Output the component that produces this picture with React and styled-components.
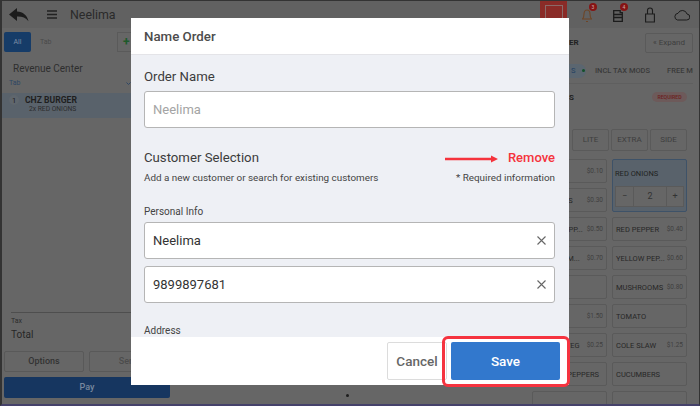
import React from 'react';
import styled, { createGlobalStyle } from 'styled-components';

const Global = createGlobalStyle`
  html, body { margin: 0; padding: 0; }
  body { width: 700px; height: 406px; overflow: hidden; background: #616161; font-family: Roboto, "Liberation Sans", sans-serif; }
  * { box-sizing: border-box; }
`;

const Frame = styled.div`
  position: relative;
  width: 700px;
  height: 406px;
  overflow: hidden;
  background: #666;
  border: 1px solid #333;
  border-left-width: 2px;
  border-bottom: 2px solid #45416a;
  display: flex;
  flex-direction: column;
`;

const TopBar = styled.header`
  height: 27px;
  flex: none;
  display: flex;
  align-items: center;
  background: #616161;
  color: #222;
`;

const BackIcon = styled.svg`
  width: 20px;
  height: 14px;
  margin-left: 7px;
`;

const MenuIcon = styled.svg`
  width: 10px;
  height: 9px;
  margin-left: 18px;
`;

const Title = styled.span`
  font-size: 12.4px;
  margin-left: 13px;
  color: #2a2a2a;
`;

const TopRight = styled.div`
  margin-left: auto;
  display: flex;
  align-items: center;
  height: 27px;
`;

const RedSquare = styled.div`
  width: 27px;
  height: 27px;
  background: #8a2b27;
  display: flex;
  align-items: center;
  justify-content: center;
  margin-right: 15px;
  &::after {
    content: '';
    width: 16px;
    height: 17px;
    border: 1px solid #8a6a68;
  }
`;

const TopIcon = styled.div`
  position: relative;
  width: ${p => p.$w}px;
  height: 16px;
  margin-right: ${p => p.$gap}px;
  svg { display: block; width: ${p => p.$w}px; height: 16px; }
`;

const Badge = styled.span`
  position: absolute;
  top: -4px;
  right: -5px;
  width: 8px;
  height: 8px;
  border-radius: 50%;
  background: #861414;
  color: #caa;
  font-size: 5px;
  line-height: 8px;
  text-align: center;
`;

const Body = styled.div`
  flex: 1;
  display: flex;
  min-height: 0;
`;

const LeftPanel = styled.aside`
  width: 176px;
  flex: none;
  display: flex;
  flex-direction: column;
  background: #666;
`;

const TabRow = styled.div`
  display: flex;
  align-items: center;
  width: 129px;
  height: 20px;
  margin: 4px 0 0 2px;
  flex: none;
`;

const TabAll = styled.div`
  width: 27px;
  height: 20px;
  border-radius: 2px;
  background: #163c68;
  color: #7e8ea6;
  font-size: 7px;
  line-height: 20px;
  text-align: center;
`;

const TabName = styled.div`
  flex: 1;
  height: 20px;
  color: #4a4a4a;
  font-size: 7px;
  line-height: 20px;
  padding-left: 9px;
`;

const TabAdd = styled.div`
  width: 16px;
  height: 20px;
  border: 1px solid #5a5a5a;
  color: #1d5a2a;
  font-size: 12px;
  font-weight: 700;
  line-height: 18px;
  padding-left: 5px;
`;

const Revenue = styled.div`
  font-size: 10px;
  color: #2e2e2e;
  margin: 11px 0 0 11px;
  line-height: 12px;
`;

const TabLabel = styled.div`
  display: flex;
  align-items: center;
  justify-content: space-between;
  width: 122px;
  font-size: 7px;
  color: #2e4664;
  margin: 4px 0 0 7px;
  line-height: 8px;
  flex: none;
`;

const OrderLine = styled.div`
  height: 25px;
  margin-top: 6px;
  background: #59626b;
  display: flex;
  padding: 2px 0 0 7px;
  flex: none;
`;

const Qty = styled.div`
  width: 10px;
  height: 10px;
  border-radius: 50%;
  background: #5f666d;
  color: #222;
  font-size: 7.5px;
  line-height: 11px;
  text-align: center;
  margin-right: 6px;
`;

const LineName = styled.div`
  font-size: 8.6px;
  font-weight: 700;
  color: #1f1f1f;
  line-height: 10px;
`;

const LineMod = styled.div`
  font-size: 6.7px;
  color: #2c2c2c;
  line-height: 7px;
  margin: 1px 0 0 4px;
`;

const Spacer = styled.div`
  flex: 1;
`;

const Totals = styled.div`
  margin-left: 9px;
  border-top: 1px solid #4e4e4e;
  padding: 4px 0 0 0;
  flex: none;
`;

const TaxText = styled.div`
  font-size: 7px;
  line-height: 8px;
  color: #2c2c2c;
`;

const TotalText = styled.div`
  font-size: 10px;
  line-height: 12px;
  margin-top: 4px;
  color: #262626;
`;

const ButtonRow = styled.div`
  display: flex;
  gap: 5px;
  margin: 10px 0 0 2px;
  flex: none;
`;

const GhostButton = styled.div`
  width: 80px;
  height: 21px;
  border: 1px solid #595959;
  border-radius: 2px;
  color: ${p => p.$muted ? '#4c4c4c' : '#333'};
  font-size: 9px;
  font-weight: 500;
  line-height: 19px;
  text-align: center;
`;

const PayButton = styled.div`
  width: 166px;
  height: 21px;
  margin: 5px 0 6px 2px;
  background: #163660;
  border-radius: 2px;
  color: #78889e;
  font-size: 9px;
  font-weight: 500;
  line-height: 21px;
  text-align: center;
  flex: none;
`;

const Center = styled.main`
  flex: 1;
  display: flex;
  align-items: flex-end;
  justify-content: center;
  padding-bottom: 7px;
`;

const Dot = styled.span`
  width: 3px;
  height: 3px;
  border-radius: 50%;
  background: #1d1d1d;
  margin-right: 52px;
`;

const RightPanel = styled.aside`
  width: 130px;
  flex: none;
  padding: 4px 0 0 0;
`;

const RightHead = styled.div`
  display: flex;
  align-items: center;
  justify-content: flex-end;
  height: 21px;
  padding-right: 6px;
  position: relative;
`;

const ExpandButton = styled.div`
  width: 48px;
  height: 20px;
  border: 1px solid #5a5a5a;
  border-radius: 2px;
  color: #3e3e3e;
  font-size: 8px;
  line-height: 18px;
  text-align: center;
`;

const Heading = styled.span`
  position: absolute;
  left: 0;
  top: 6px;
  font-size: 8px;
  font-weight: 700;
  color: #222;
`;

const ModTabs = styled.div`
  display: flex;
  align-items: center;
  height: 26px;
  margin: 5px 6px 0 0;
  font-size: 7.5px;
  font-weight: 500;
  color: #3a3a3a;
  white-space: nowrap;
  overflow: hidden;
  border-bottom: 1px solid #5f5f5f;
`;

const ActivePill = styled.span`
  display: inline-flex;
  align-items: center;
  gap: 3px;
  height: 14px;
  width: 17px;
  flex: none;
  padding-left: 2px;
  margin-right: 9px;
  border-radius: 0 7px 7px 0;
  background: #5b6670;
  color: #2c4664;
  &::after {
    content: '';
    width: 3px;
    height: 3px;
    border-radius: 50%;
    background: #14502a;
    margin-left: 3px;
  }
`;

const TabItem = styled.span`
  margin-right: 17px;
`;

const GroupHead = styled.div`
  display: flex;
  align-items: center;
  justify-content: space-between;
  height: 26px;
  padding-right: 12px;
  font-size: 8px;
  font-weight: 700;
  color: #222;
`;

const Required = styled.span`
  width: 35px;
  font-size: 5.2px;
  font-weight: 500;
  color: #6c2020;
  background: #6d5a5a;
  border-radius: 5px;
  padding: 2px 0;
  text-align: center;
`;

const Sizes = styled.div`
  display: grid;
  grid-template-columns: repeat(3, 37px);
  gap: 2px;
  margin: 19px 0 0 3px;
`;

const SizeButton = styled.div`
  height: 22px;
  border: 1px solid #5a5a5a;
  border-radius: 2px;
  color: #3e3e3e;
  font-size: 8px;
  line-height: 20px;
  text-align: center;
`;

const Grid = styled.div`
  display: grid;
  grid-template-columns: 75px 75px;
  grid-auto-rows: 24px;
  gap: 5px;
  margin: 8px 0 0 -37px;
`;

const Card = styled.div`
  border: 1px solid #5a5a5a;
  border-radius: 2px;
  display: flex;
  align-items: center;
  justify-content: ${p => p.$end ? 'flex-end' : 'space-between'};
  gap: ${p => p.$gap || 0}px;
  padding: 0 ${p => p.$pad || 3}px;
  font-size: 7.5px;
  color: #262626;
  white-space: nowrap;
  small { font-size: 6.5px; color: #3f3f3f; }
`;

const SelectedCard = styled.div`
  grid-row: span 2;
  background: #59626b;
  border: 1px solid #3e5268;
  border-radius: 2px;
  padding: 9px 2px 0;
  font-size: 7.5px;
  line-height: 9px;
  color: #222;
`;

const Stepper = styled.div`
  display: grid;
  grid-template-columns: 17px 1fr 17px;
  height: 21px;
  margin-top: 8px;
  background: #666;
  border: 1px solid #5a5a5a;
  span {
    text-align: center;
    line-height: 19px;
    font-size: 9px;
    color: #333;
  }
  span + span { border-left: 1px solid #5a5a5a; }
`;

const Modal = styled.section`
  position: absolute;
  left: 129px;
  top: 17px;
  width: 438px;
  height: 367px;
  background: #eef0f5;
  display: flex;
  flex-direction: column;
`;

const ModalHead = styled.div`
  height: 37px;
  flex: none;
  background: #fff;
  border-bottom: 1px solid #e4e4e8;
  padding-left: 13px;
  font-size: 13.3px;
  font-weight: 500;
  line-height: 38px;
  color: #4c4c4c;
`;

const ModalBody = styled.div`
  flex: 1;
  min-height: 0;
  overflow: hidden;
  padding: 13px 14px 0 13px;
  color: #3e3e3e;
`;

const OrderLabel = styled.div`
  font-size: 13.2px;
  line-height: 18px;
  color: #3c3c3c;
`;

const Field = styled.div`
  display: flex;
  align-items: center;
  justify-content: space-between;
  height: 37px;
  background: #fff;
  border: 1.5px solid #b5b5b5;
  border-radius: 3px;
  padding: 0 8px;
  font-size: 13px;
  color: ${p => p.$placeholder ? '#a4a4a4' : '#333'};
  margin-top: ${p => p.$top}px;
`;

const CustomerRow = styled.div`
  display: flex;
  align-items: center;
  justify-content: space-between;
  margin-top: 20px;
  height: 18px;
`;

const SectionTitle = styled.span`
  font-size: 13.2px;
  color: #3c3c3c;
`;

const RemoveWrap = styled.span`
  display: flex;
  align-items: center;
  gap: 10px;
`;

const Arrow = styled.svg`
  width: 53px;
  height: 8px;
  margin-top: 3px;
`;

const Remove = styled.span`
  font-size: 13px;
  font-weight: 500;
  color: #f5333c;
`;

const HelpRow = styled.div`
  display: flex;
  justify-content: space-between;
  font-size: 9.9px;
  line-height: 14px;
  margin-top: 5px;
  color: #444;
`;

const InfoLabel = styled.div`
  font-size: 10px;
  line-height: 14px;
  color: #444;
  margin-top: ${p => p.$top}px;
`;

const ModalFoot = styled.div`
  height: 48px;
  flex: none;
  background: #fff;
  display: flex;
  align-items: center;
  justify-content: flex-end;
  gap: 4px;
  padding-right: 9px;
`;

const CancelButton = styled.div`
  width: 60px;
  height: 38px;
  border: 1px solid #dcdcdc;
  border-radius: 2px;
  font-size: 13.5px;
  font-weight: 500;
  line-height: 36px;
  text-align: center;
  color: #666;
`;

const SaveButton = styled.div`
  position: relative;
  width: 109px;
  height: 38px;
  background: #3278cd;
  border-radius: 2px;
  font-size: 13.5px;
  font-weight: 500;
  line-height: 38px;
  text-align: center;
  color: #fff;
  &::after {
    content: '';
    position: absolute;
    inset: -6px -10px -7px -9px;
    border: 3px solid #f5333f;
    border-radius: 6px;
  }
`;

const Clear = () => (
  <svg width="9" height="9" viewBox="0 0 9 9">
    <path d="M.5.5l8 8M8.500.5l-8 8" stroke="#666" strokeWidth="1.100" />
  </svg>
);

export default function App() {
  return (
    <>
      <Global />
      <Frame>
        <TopBar>
          <BackIcon viewBox="0 0 20 14">
            <path d="M0 6.500 8 0v3.600c6 .2 10 3.600 11.500 9.600C16.500 9.600 13 8.400 8 8.600V13z" fill="#1c1c1c" />
          </BackIcon>
          <MenuIcon viewBox="0 0 10 9">
            <path d="M0 1h10M0 4.500h10M0 8h10" stroke="#222" strokeWidth="1.400" />
          </MenuIcon>
          <Title>Neelima</Title>
          <TopRight>
            <RedSquare />
            <TopIcon $w={10} $gap={21}>
              <svg viewBox="0 0 10 16"><path d="M.5 12c1-1 1.500-2 1.500-5 0-2.500 1.300-4 3-4s3 1.500 3 4c0 3 .5 4 1.500 5zM4 14.500h2" fill="none" stroke="#6e4526" strokeWidth="1.100" /></svg>
              <Badge>3</Badge>
            </TopIcon>
            <TopIcon $w={10} $gap={22}>
              <svg viewBox="0 0 10 16"><path d="M.7 3.700h6.500v2h2.100v8.600H.7zM.7 7.500h8.600M.7 10.500h8.600" fill="none" stroke="#1c1c1c" strokeWidth="1.300" /></svg>
              <Badge>4</Badge>
            </TopIcon>
            <TopIcon $w={10} $gap={19}>
              <svg viewBox="0 0 10 16"><path d="M.6 7h8.800v8H.6zM2.500 7V3.500a2.500 2.500 0 0 1 5 0V7" fill="none" stroke="#1c1c1c" strokeWidth="1.100" /></svg>
            </TopIcon>
            <TopIcon $w={16} $gap={9}>
              <svg viewBox="0 0 16 16"><path d="M3.500 13h9a3 3 0 0 0 .5-6A4.800 4.800 0 0 0 4 6.300 3.400 3.400 0 0 0 3.500 13z" fill="none" stroke="#1c1c1c" strokeWidth="1" /></svg>
            </TopIcon>
          </TopRight>
        </TopBar>
        <Body>
          <LeftPanel>
            <TabRow>
              <TabAll>All</TabAll>
              <TabName>Tab</TabName>
              <TabAdd>+</TabAdd>
            </TabRow>
            <Revenue>Revenue Center</Revenue>
            <TabLabel>
              Tab
              <svg width="5" height="3" viewBox="0 0 5 3"><path d="M.5.500l2 2 2-2" fill="none" stroke="#2e4664" /></svg>
            </TabLabel>
            <OrderLine>
              <Qty>1</Qty>
              <div>
                <LineName>CHZ BURGER</LineName>
                <LineMod>2x RED ONIONS</LineMod>
              </div>
            </OrderLine>
            <Spacer />
            <Totals>
              <TaxText>Tax</TaxText>
              <TotalText>Total</TotalText>
            </Totals>
            <ButtonRow>
              <GhostButton>Options</GhostButton>
              <GhostButton $muted>Send</GhostButton>
            </ButtonRow>
            <PayButton>Pay</PayButton>
          </LeftPanel>
          <Center><Dot /></Center>
          <RightPanel>
            <RightHead>
              <Heading>ER</Heading>
              <ExpandButton>« Expand</ExpandButton>
            </RightHead>
            <ModTabs>
              <ActivePill>S</ActivePill>
              <TabItem>INCL TAX MODS</TabItem>
              <TabItem>FREE MODS</TabItem>
            </ModTabs>
            <GroupHead>
              <span>S</span>
              <Required>REQUIRED</Required>
            </GroupHead>
            <Sizes>
              <SizeButton>LITE</SizeButton>
              <SizeButton>EXTRA</SizeButton>
              <SizeButton>SIDE</SizeButton>
            </Sizes>
            <Grid>
              <Card $end><small>$0.10</small></Card>
              <SelectedCard>
                RED ONIONS
                <Stepper><span>−</span><span>2</span><span>+</span></Stepper>
              </SelectedCard>
              <Card $end $gap={14}><span>S</span><small>$0.30</small></Card>
              <Card $end $gap={4}><span>EPP...</span><small>$0.50</small></Card>
              <Card><span>RED PEPPER</span><small>$0.40</small></Card>
              <Card $end $gap={7}><span>M...</span><small>$0.70</small></Card>
              <Card><span>YELLOW PEP...</span><small>$0.60</small></Card>
              <Card />
              <Card><span>MUSHROOMS</span><small>$0.80</small></Card>
              <Card $end><small>$1.50</small></Card>
              <Card><span>TOMATO</span></Card>
              <Card $end $gap={7}><span>VEG</span><small>$0.25</small></Card>
              <Card><span>COLE SLAW</span><small>$1.25</small></Card>
              <Card $end $pad={7}><span>PEPPERS</span></Card>
              <Card><span>CUCUMBERS</span></Card>
              <Card />
              <Card />
            </Grid>
          </RightPanel>
        </Body>
        <Modal>
          <ModalHead>Name Order</ModalHead>
          <ModalBody>
            <OrderLabel>Order Name</OrderLabel>
            <Field $placeholder $top={5}>Neelima</Field>
            <CustomerRow>
              <SectionTitle>Customer Selection</SectionTitle>
              <RemoveWrap>
                <Arrow viewBox="0 0 53 8"><path d="M0 2.800h46V.5l7 3.500-7 3.500V5.200H0z" fill="#f5333c" /></Arrow>
                <Remove>Remove</Remove>
              </RemoveWrap>
            </CustomerRow>
            <HelpRow>
              <span>Add a new customer or search for existing customers</span>
              <span>* Required information</span>
            </HelpRow>
            <InfoLabel $top={20}>Personal Info</InfoLabel>
            <Field $top={3}>Neelima<Clear /></Field>
            <Field $top={7}>9899897681<Clear /></Field>
            <InfoLabel $top={21}>Address</InfoLabel>
          </ModalBody>
          <ModalFoot>
            <CancelButton>Cancel</CancelButton>
            <SaveButton>Save</SaveButton>
          </ModalFoot>
        </Modal>
      </Frame>
    </>
  );
}
